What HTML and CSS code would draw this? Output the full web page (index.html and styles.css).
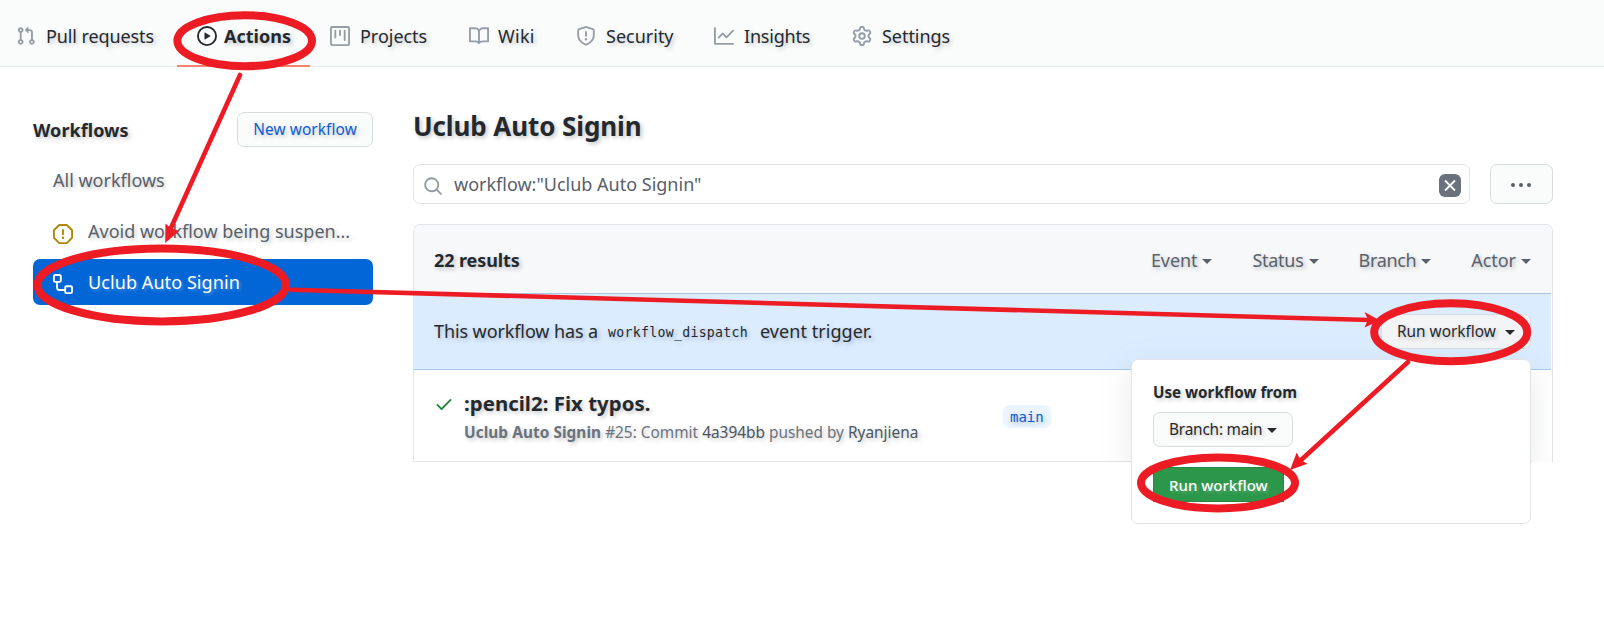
FILE: index.html
```html
<!DOCTYPE html>
<html lang="en">
<head>
<meta charset="utf-8">
<title>Uclub Auto Signin</title>
<link rel="stylesheet" href="styles.css">
</head>
<body>
<nav class="nav">
  <a class="tab tab-pulls"><svg class="icon" viewBox="0 0 16 16"><path fill-rule="evenodd" d="M7.177 3.073L9.573.677A.25.25 0 0110 .854v4.792a.25.25 0 01-.427.177L7.177 3.427a.25.25 0 010-.354zM3.75 2.5a.75.75 0 100 1.5.75.75 0 000-1.5zm-2.25.75a2.25 2.25 0 113 2.122v5.256a2.251 2.251 0 11-1.5 0V5.372A2.25 2.25 0 011.5 3.25zM11 2.5h-1V4h1a1 1 0 011 1v5.628a2.251 2.251 0 101.5 0V5A2.5 2.5 0 0011 2.5zm1 10.25a.75.75 0 111.5 0 .75.75 0 01-1.5 0zM3.75 12a.75.75 0 100 1.5.75.75 0 000-1.5z"/></svg><span>Pull requests</span></a>
  <a class="tab tab-actions"><svg class="icon" viewBox="0 0 16 16"><path fill-rule="evenodd" d="M1.5 8a6.5 6.5 0 1113 0 6.5 6.5 0 01-13 0zM8 0a8 8 0 100 16A8 8 0 008 0zM6.379 5.227A.25.25 0 006 5.442v5.117a.25.25 0 00.379.214l4.264-2.559a.25.25 0 000-.428L6.379 5.227z"/></svg><span>Actions</span></a>
  <a class="tab tab-projects"><svg class="icon" viewBox="0 0 16 16"><path fill-rule="evenodd" d="M1.75 0A1.75 1.75 0 000 1.75v12.5C0 15.216.784 16 1.75 16h12.5A1.75 1.75 0 0016 14.25V1.75A1.75 1.75 0 0014.25 0H1.75zM1.5 1.75a.25.25 0 01.25-.25h12.5a.25.25 0 01.25.25v12.5a.25.25 0 01-.25.25H1.75a.25.25 0 01-.25-.25V1.75zM11.75 3a.75.75 0 00-.75.75v7.5a.75.75 0 001.5 0v-7.5a.75.75 0 00-.75-.75zm-8.25.75a.75.75 0 011.5 0v5.5a.75.75 0 01-1.5 0v-5.5zM8 3a.75.75 0 00-.75.75v3.5a.75.75 0 001.5 0v-3.5A.75.75 0 008 3z"/></svg><span>Projects</span></a>
  <a class="tab tab-wiki"><svg class="icon" viewBox="0 0 16 16"><path fill-rule="evenodd" d="M0 1.75A.75.75 0 01.75 1h4.253c1.227 0 2.317.59 3 1.501A3.744 3.744 0 0111.006 1h4.245a.75.75 0 01.75.75v10.5a.75.75 0 01-.75.75h-4.507a2.25 2.25 0 00-1.591.659l-.622.621a.75.75 0 01-1.06 0l-.622-.621A2.25 2.25 0 005.258 13H.75a.75.75 0 01-.75-.75V1.75zm8.755 3a2.25 2.25 0 012.25-2.25H14.5v9h-3.757c-.71 0-1.4.201-1.992.572l.004-7.322zm-1.504 7.324l.004-5.073-.002-2.253A2.25 2.25 0 005.003 2.5H1.5v9h3.757a3.75 3.75 0 011.994.574z"/></svg><span>Wiki</span></a>
  <a class="tab tab-security"><svg class="icon" viewBox="0 0 16 16"><path fill-rule="evenodd" d="M7.467.133a1.75 1.75 0 011.066 0l5.25 1.68A1.75 1.75 0 0115 3.48V7c0 1.566-.32 3.182-1.303 4.682-.983 1.498-2.585 2.813-5.032 3.855a1.7 1.7 0 01-1.33 0c-2.447-1.042-4.049-2.357-5.032-3.855C1.32 10.182 1 8.566 1 7V3.48a1.75 1.75 0 011.217-1.667l5.25-1.68zm.61 1.429a.25.25 0 00-.153 0l-5.25 1.68a.25.25 0 00-.174.238V7c0 1.358.275 2.666 1.057 3.86.784 1.194 2.121 2.34 4.366 3.297a.2.2 0 00.154 0c2.245-.956 3.582-2.104 4.366-3.298C13.225 9.666 13.5 8.36 13.5 7V3.48a.25.25 0 00-.174-.237l-5.25-1.68zM9 10.5a1 1 0 11-2 0 1 1 0 012 0zm-.25-5.75a.75.75 0 10-1.5 0v3a.75.75 0 001.5 0v-3z"/></svg><span>Security</span></a>
  <a class="tab tab-insights"><svg class="icon" viewBox="0 0 16 16"><path fill-rule="evenodd" d="M1.5 1.75a.75.75 0 00-1.5 0v12.5c0 .414.336.75.75.75h14.5a.75.75 0 000-1.5H1.5V1.75zm14.28 2.53a.75.75 0 00-1.06-1.06L10 7.94 7.53 5.47a.75.75 0 00-1.06 0L3.22 8.72a.75.75 0 001.06 1.06L7 7.06l2.47 2.47a.75.75 0 001.06 0l5.25-5.25z"/></svg><span>Insights</span></a>
  <a class="tab tab-settings"><svg class="icon" viewBox="0 0 16 16"><path fill-rule="evenodd" d="M7.429 1.525a6.593 6.593 0 011.142 0c.036.003.108.036.137.146l.289 1.105c.147.56.55.967.997 1.189.174.086.341.183.501.29.417.278.97.423 1.53.27l1.102-.303c.11-.03.175.016.195.046.219.31.41.641.573.989.014.031.022.11-.059.19l-.815.806c-.411.406-.562.957-.53 1.456a4.588 4.588 0 010 .582c-.032.499.119 1.05.53 1.456l.815.806c.08.08.073.159.059.19a6.494 6.494 0 01-.573.99c-.02.029-.086.074-.195.045l-1.103-.303c-.559-.153-1.112-.008-1.529.27-.16.107-.327.204-.5.29-.449.222-.851.628-.998 1.189l-.289 1.105c-.029.11-.101.143-.137.146a6.613 6.613 0 01-1.142 0c-.036-.003-.108-.037-.137-.146l-.289-1.105c-.147-.56-.55-.967-.997-1.189a4.502 4.502 0 01-.501-.29c-.417-.278-.97-.423-1.53-.27l-1.102.303c-.11.03-.175-.016-.195-.046a6.492 6.492 0 01-.573-.989c-.014-.031-.022-.11.059-.19l.815-.806c.411-.406.562-.957.53-1.456a4.587 4.587 0 010-.582c.032-.499-.119-1.05-.53-1.456l-.815-.806c-.08-.08-.073-.159-.059-.19a6.44 6.44 0 01.573-.99c.02-.029.086-.075.195-.045l1.103.303c.559.153 1.112.008 1.529-.27.16-.107.327-.204.5-.29.449-.222.851-.628.998-1.189l.289-1.105c.029-.11.101-.143.137-.146zM8 0c-.236 0-.47.01-.701.03-.743.065-1.29.615-1.458 1.261l-.29 1.106c-.017.066-.078.158-.211.224a5.994 5.994 0 00-.668.386c-.123.082-.233.09-.3.071L3.27 2.776c-.644-.177-1.392.02-1.82.63a7.977 7.977 0 00-.704 1.217c-.315.675-.111 1.422.363 1.891l.815.806c.05.048.098.147.088.294a6.084 6.084 0 000 .772c.01.147-.038.246-.088.294l-.815.806c-.474.469-.678 1.216-.363 1.891.2.428.436.835.704 1.218.428.609 1.176.806 1.82.63l1.103-.303c.066-.019.176-.011.299.071.213.143.436.272.668.386.133.066.194.158.212.224l.289 1.106c.169.646.715 1.196 1.458 1.26a8.094 8.094 0 001.402 0c.743-.064 1.29-.614 1.458-1.26l.29-1.106c.017-.066.078-.158.211-.224a5.98 5.98 0 00.668-.386c.123-.082.233-.09.3-.071l1.102.302c.644.177 1.392-.02 1.82-.63.268-.382.505-.789.704-1.217.315-.675.111-1.422-.364-1.891l-.814-.806c-.05-.048-.098-.147-.088-.294a6.1 6.1 0 000-.772c-.01-.147.039-.246.088-.294l.814-.806c.475-.469.679-1.216.364-1.891a7.992 7.992 0 00-.704-1.218c-.428-.609-1.176-.806-1.82-.63l-1.103.303c-.066.019-.176.011-.299-.071a5.991 5.991 0 00-.668-.386c-.133-.066-.194-.158-.212-.224L10.16 1.29C9.99.645 9.444.095 8.701.031A8.094 8.094 0 008 0zm1.5 8a1.5 1.5 0 11-3 0 1.5 1.5 0 013 0zM11 8a3 3 0 11-6 0 3 3 0 016 0z"/></svg><span>Settings</span></a>
</nav>

<div class="layout">
  <aside class="sidebar">
    <div class="side-head"><h2 class="side-title">Workflows</h2><a class="btn btn-new">New workflow</a></div>
    <a class="side-item item-all">All workflows</a>
    <a class="side-item item-avoid"><svg class="icon warn" viewBox="0 0 16 16"><path fill-rule="evenodd" d="M4.47.22A.75.75 0 015 0h6a.75.75 0 01.53.22l4.25 4.25c.141.14.22.331.22.53v6a.75.75 0 01-.22.53l-4.25 4.25A.75.75 0 0111 16H5a.75.75 0 01-.53-.22L.22 11.53A.75.75 0 010 11V5a.75.75 0 01.22-.53L4.47.22zm.84 1.28L1.5 5.31v5.38l3.81 3.81h5.38l3.81-3.81V5.31L10.69 1.5H5.31zM8 4a.75.75 0 01.75.75v3.5a.75.75 0 01-1.5 0v-3.5A.75.75 0 018 4zm0 8a1 1 0 100-2 1 1 0 000 2z"/></svg><span>Avoid workflow being suspen...</span></a>
    <a class="side-item item-active"><svg class="icon" viewBox="0 0 16 16"><path fill-rule="evenodd" d="M0 1.75C0 .784.784 0 1.75 0h3.5C6.216 0 7 .784 7 1.75v3.5A1.75 1.75 0 015.25 7H4v4a1 1 0 001 1h4v-1.25C9 9.784 9.784 9 10.75 9h3.5c.966 0 1.75.784 1.75 1.75v3.5A1.75 1.75 0 0114.25 16h-3.5A1.75 1.75 0 019 14.25v-.75H5A2.5 2.5 0 012.5 11V7h-.75A1.75 1.75 0 010 5.25v-3.5zm1.75-.25a.25.25 0 00-.25.25v3.5c0 .138.112.25.25.25h3.5a.25.25 0 00.25-.25v-3.5a.25.25 0 00-.25-.25h-3.5zm9 9a.25.25 0 00-.25.25v3.5c0 .138.112.25.25.25h3.5a.25.25 0 00.25-.25v-3.5a.25.25 0 00-.25-.25h-3.5z"/></svg><span>Uclub Auto Signin</span></a>
  </aside>

  <main class="main">
    <h1 class="title">Uclub Auto Signin</h1>
    <div class="search-row">
      <div class="search"><svg class="icon glass" viewBox="0 0 16 16"><path fill-rule="evenodd" d="M11.5 7a4.499 4.499 0 11-8.998 0A4.499 4.499 0 0111.5 7zm-.82 4.74a6 6 0 111.06-1.06l3.04 3.04a.75.75 0 11-1.06 1.06l-3.04-3.04z"/></svg><span class="query">workflow:"Uclub Auto Signin"</span><span class="clear"><svg viewBox="0 0 22 23"><path d="M6 6.5l10 10M16 6.5l-10 10"/></svg></span></div>
      <div class="more"><i></i><i></i><i></i></div>
    </div>
    <section class="box">
      <header class="box-head"><strong class="count">22 results</strong>
        <div class="filters"><span class="filter f-event">Event</span><span class="filter f-status">Status</span><span class="filter f-branch">Branch</span><span class="filter f-actor">Actor</span></div>
      </header>
      <div class="dispatch">
        <p class="dispatch-text"><span class="d-lead">This workflow has a</span><code class="event">workflow_dispatch</code><span class="d-tail">event trigger.</span></p>
        <div class="run-wrap">
          <a class="btn run-toggle">Run workflow</a>
          <div class="menu">
            <strong class="menu-title">Use workflow from</strong>
            <a class="btn branch-btn">Branch: main</a>
            <a class="run-btn">Run workflow</a>
          </div>
        </div>
      </div>
      <div class="run">
        <svg class="icon check" viewBox="0 0 16 16"><path fill-rule="evenodd" d="M13.78 4.22a.75.75 0 010 1.06l-7.25 7.25a.75.75 0 01-1.06 0L2.22 9.28a.75.75 0 011.06-1.06L6 10.94l6.72-6.72a.75.75 0 011.06 0z"/></svg>
        <div class="run-info"><strong class="run-title">:pencil2: Fix typos.</strong>
          <div class="run-meta"><b>Uclub Auto Signin</b> #25: Commit <em>4a394bb</em> pushed by <em>Ryanjiena</em></div></div>
        <span class="branch-tag">main</span>
      </div>
    </section>
  </main>
</div>

<svg class="marks" viewBox="0 0 1604 640">
  <g fill="none" stroke="#ed1c24" stroke-width="8">
    <ellipse cx="244.7" cy="40.7" rx="67.3" ry="25.5"/>
    <ellipse cx="161.7" cy="284.9" rx="124.3" ry="36.5"/>
    <ellipse cx="1450.7" cy="332.2" rx="76.5" ry="29"/>
    <ellipse cx="1218" cy="482.9" rx="77" ry="25.5"/>
  </g>
  <g stroke="#ed1c24" stroke-width="4.6" stroke-linecap="round">
    <path d="M240 75L170 230M291 289.7L1370 320M1408 362L1300 461"/>
  </g>
  <g fill="#ed1c24">
    <path d="M165.2 243L165.5 223.5L170.5 228L179 231Z"/>
    <path d="M1380 320.5L1364.5 312L1368 319.5L1364.5 327.5Z"/>
    <path d="M1290 470L1296.7 452.5L1300.5 460L1307.5 463.7Z"/>
  </g>
</svg>
</body>
</html>
```
FILE: styles.css
```css
* { box-sizing: border-box; }
body {
  margin: 0;
  width: 1604px;
  height: 640px;
  overflow: hidden;
  position: relative;
  background: #fff;
  color: #24292e;
  font: 18px/26px "Noto Sans", "Open Sans", sans-serif;
  text-shadow: 2px 2px 4px rgba(36, 41, 46, .27);
}
h1, h2, p { margin: 0; }
.icon { width: 20px; height: 20px; flex: none; fill: currentColor; }

.nav {
  display: flex;
  height: 67px;
  background: #fafcfc;
  border-bottom: 1px solid #e5e8eb;
}
.tab {
  display: flex;
  height: 67px;
  padding: 23px 0 0 20px;
  gap: 10px;
  white-space: nowrap;
}
.tab .icon { margin-top: 3px; color: #959da5; }
.tab-pulls { width: 177px; padding-left: 16px; letter-spacing: -.1px; }
.tab-actions { width: 133px; gap: 7px; font-weight: 700; border-bottom: 2px solid #f9826c; }
.tab-actions .icon { color: #24292e; }
.tab-projects { width: 138px; letter-spacing: -.03px; }
.tab-wiki { width: 108px; padding-left: 21px; gap: 9px; letter-spacing: .25px; }
.tab-security { width: 138px; letter-spacing: 0; }
.tab-insights { width: 138px; letter-spacing: -.2px; }
.tab-settings { letter-spacing: -.05px; }

.layout { display: flex; gap: 40px; padding: 45px 51px 0 33px; }
.sidebar { width: 340px; }
.side-head { display: flex; justify-content: space-between; align-items: center; height: 35px; }
.side-title { font-size: 18px; line-height: 26px; letter-spacing: .05px; }
.btn {
  border: 1px solid #d9dcdf;
  border-radius: 7px;
  background: #fafcfc;
  font-size: 15.4px;
  line-height: 33px;
  height: 35px;
  white-space: nowrap;
}
.btn-new { width: 136px; text-align: center; color: #0b5cd6; letter-spacing: .1px; }
.side-item {
  display: flex;
  gap: 15px;
  padding-left: 20px;
  color: #586069;
  white-space: nowrap;
  border-radius: 7px;
  line-height: 46px;
  height: 46px;
}
.side-item .icon { margin-top: 15px; }
.item-all { margin-top: 10px; }
.item-avoid { margin-top: 5px; }
.item-avoid .warn { color: #b08800; margin-top: 16px; }
.item-active { background: #0366d6; color: #fff; margin-top: 5px; letter-spacing: .08px; text-shadow: 2px 2px 3px rgba(255, 255, 255, .25); }

.main { width: 1140px; }
.title { font-size: 26px; line-height: 36px; margin-top: -4px; letter-spacing: -.1px; }
.search-row { display: flex; justify-content: space-between; margin-top: 20px; }
.search {
  display: flex;
  align-items: center;
  width: 1057px;
  height: 40px;
  padding: 0 8px 0 9px;
  border: 1px solid #e1e4e8;
  border-radius: 7px;
  color: #586069;
  text-shadow: none;
}
.glass { color: #959da5; margin-top: 3px; }
.query { margin-left: 11px; }
.clear { display: flex; width: 22px; height: 23px; margin: 2px 0 0 auto; border-radius: 6px; background: #6a737d; }
.clear svg { width: 22px; height: 23px; fill: none; stroke: #fff; stroke-width: 1.8; }
.more {
  display: flex;
  align-items: center;
  justify-content: center;
  gap: 4px;
  width: 63px;
  height: 40px;
  padding: 2px 2px 0 0;
  border: 1px solid #d9dcdf;
  border-radius: 7px;
  background: #fafcfc;
}
.more i { width: 4px; height: 4px; border-radius: 50%; background: #586069; }

.box {
  height: 238px;
  margin-top: 20px;
  border: 1px solid #e1e4e8;
  border-bottom: 0;
  border-radius: 7px 7px 0 0;
}
.box-head {
  display: flex;
  justify-content: space-between;
  align-items: flex-start;
  height: 68px;
  padding: 22px 21px 0 20px;
  background: #f6f8fa;
  border-radius: 6px 6px 0 0;
}
.count { letter-spacing: -.1px; }
.filters { display: flex; gap: 40px; color: #586069; }
.filter { display: flex; align-items: center; gap: 5px; }
.f-event { letter-spacing: -.1px; }
.f-status { letter-spacing: -.25px; }
.f-branch { letter-spacing: -.35px; }
.f-actor { letter-spacing: -.05px; }
.filter::after, .run-toggle::after, .branch-btn::after {
  content: "";
  border: 5px solid transparent;
  border-top-color: currentColor;
  border-bottom: 0;
  margin-top: 2px;
}
.dispatch {
  display: flex;
  justify-content: space-between;
  height: 77px;
  margin-right: 1px;
  padding: 20px 20px 0 20px;
  background: #dbecff;
  border: solid #a9c8e8;
  border-width: 1px 0;
}
.dispatch-text { display: flex; white-space: nowrap; padding-top: 4px; }
.event { font: 13.2px/28px "DejaVu Sans Mono", monospace; margin: 1px 0 0 9px; width: 152px; letter-spacing: .3px; }
.d-lead { width: 165px; letter-spacing: -.1px; }
.d-tail { letter-spacing: .05px; }
.run-wrap { position: relative; }
.run-wrap::before {
  content: "";
  position: absolute;
  top: 45px;
  right: 0;
  width: 400px;
  height: 103px;
  box-shadow: 0 10px 28px rgba(149, 157, 165, .22);
  clip-path: inset(-20px -34px 0 -40px);
}
.run-toggle {
  display: flex;
  align-items: center;
  gap: 9px;
  width: 150px;
  padding-left: 15px;
  background: #f3f4f6;
}
.menu {
  position: absolute;
  z-index: 1;
  top: 45px;
  right: 0;
  display: flex;
  flex-direction: column;
  align-items: flex-start;
  width: 400px;
  height: 165px;
  padding: 19px 21px;
  background: #fff;
  border: 1px solid #e1e4e8;
  border-radius: 7px;
}
.menu-title { font-size: 15.2px; line-height: 26px; }
.branch-btn { display: flex; align-items: center; gap: 5px; width: 140px; margin-top: 7px; padding-left: 15px; letter-spacing: -.2px; }
.run-btn {
  width: 131px;
  height: 35px;
  margin-top: 20px;
  padding-left: 15px;
  background: #2c974b;
  border: 1px solid #278743;
  color: #fff;
  font: 500 15px/34px "Noto Sans", sans-serif;
  white-space: nowrap;
  text-shadow: 2px 2px 3px rgba(255, 255, 255, .2);
}
.run { display: flex; width: 1118px; padding: 19px 0 0 20px; height: 92px; border-bottom: 1px solid #e1e4e8; }
.check { color: #22863a; margin-top: 5px; }
.run-info { width: 539px; margin-left: 10px; white-space: nowrap; }
.run-title { display: block; font-size: 20.4px; line-height: 28px; letter-spacing: .03px; }
.run-meta { font-size: 15.4px; line-height: 22px; margin-top: 5px; color: #6a737d; }
.run-meta b { color: #6a737d; letter-spacing: .05px; }
.run-meta em { font-style: normal; color: #4c545c; }
.branch-tag {
  height: 23px;
  margin-top: 16px;
  padding: 0 7px;
  border-radius: 7px;
  background: #eaf5ff;
  color: #0b5cd6;
  font: 14px/24px "DejaVu Sans Mono", monospace;
}
.marks { position: absolute; z-index: 2; left: 0; top: 0; width: 1604px; height: 640px; }
```
